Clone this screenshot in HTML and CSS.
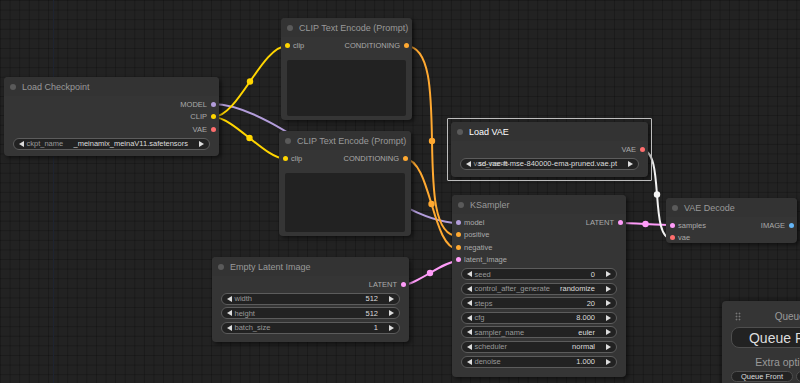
FILE: index.html
```html
<!DOCTYPE html>
<html>
<head>
  <title>ComfyUI</title>
  <link rel="stylesheet" href="styles.css">
</head>
<body>
<div class="canvas">

  <!-- links sit under the nodes -->
  <svg class="links" width="800" height="383" viewBox="0 0 800 383">
    <g fill="none" stroke-width="2">
      <path stroke="#b39ddb" d="M213 104 C281 104 390 223 458 223"/>
      <path stroke="#ffd500" d="M213 117 C238.6 117 261.4 46 287 46"/>
      <path stroke="#ffd500" d="M213 117 C234 117 265 159 286 159"/>
      <path stroke="#ffa931" d="M406 46 C455 46 409 236 458 236"/>
      <path stroke="#ffa931" d="M405 159 C431 159 432 249 458 249"/>
      <path stroke="#ff9cf9" d="M402 285 C417 285 443 261 458 261"/>
      <path stroke="#ff9cf9" d="M619 223 C632 223 659 225 672 225"/>
      <path stroke="#f4f4f4" d="M642 150 C665.5 150 648.5 239 672 239"/>
    </g>
    <g>
      <circle cx="250" cy="81.5" r="3.2" fill="#ffd500"/>
      <circle cx="249.5" cy="138" r="3.2" fill="#ffd500"/>
      <circle cx="432" cy="141" r="3.2" fill="#ffa931"/>
      <circle cx="431.5" cy="204" r="3.2" fill="#ffa931"/>
      <circle cx="430" cy="273" r="3.2" fill="#ff9cf9"/>
      <circle cx="645.5" cy="224" r="3.2" fill="#ff9cf9"/>
      <circle cx="657" cy="194.5" r="3.2" fill="#f4f4f4"/>
    </g>
  </svg>

  <!-- Load Checkpoint -->
  <div class="node ckpt">
    <div class="title"><span class="bullet"></span>Load Checkpoint</div>
    <div class="body">
      <div class="row"><span></span><span class="out">MODEL<i class="slot model"></i></span></div>
      <div class="row"><span></span><span class="out">CLIP<i class="slot clip"></i></span></div>
      <div class="row"><span></span><span class="out">VAE<i class="slot vae"></i></span></div>
      <div class="widgets">
        <div class="widget"><i class="arr-l"></i><span class="name">ckpt_name</span><span class="val">_meinamix_meinaV11.safetensors</span><i class="arr-r"></i></div>
      </div>
    </div>
  </div>

  <!-- CLIP Text Encode (positive) -->
  <div class="node clip1">
    <div class="title"><span class="bullet"></span>CLIP Text Encode (Prompt)</div>
    <div class="body">
      <div class="row"><span class="in"><i class="slot clip"></i>clip</span><span class="out">CONDITIONING<i class="slot cond"></i></span></div>
      <div class="prompt"></div>
    </div>
  </div>

  <!-- CLIP Text Encode (negative) -->
  <div class="node clip2">
    <div class="title"><span class="bullet"></span>CLIP Text Encode (Prompt)</div>
    <div class="body">
      <div class="row"><span class="in"><i class="slot clip"></i>clip</span><span class="out">CONDITIONING<i class="slot cond"></i></span></div>
      <div class="prompt"></div>
    </div>
  </div>

  <!-- Load VAE (selected) -->
  <div class="node vae-loader selected">
    <div class="title"><span class="bullet"></span>Load VAE</div>
    <div class="body">
      <div class="row"><span></span><span class="out">VAE<i class="slot vae"></i></span></div>
      <div class="widgets">
        <div class="widget overlap"><i class="arr-l"></i><span class="name">vae_name</span><span class="val">sd-vae-ft-mse-840000-ema-pruned.vae.pt</span><i class="arr-r"></i></div>
      </div>
    </div>
  </div>

  <!-- KSampler -->
  <div class="node ksampler">
    <div class="title"><span class="bullet"></span>KSampler</div>
    <div class="body">
      <div class="row"><span class="in"><i class="slot model"></i>model</span><span class="out">LATENT<i class="slot latent"></i></span></div>
      <div class="row"><span class="in"><i class="slot cond"></i>positive</span></div>
      <div class="row"><span class="in"><i class="slot cond"></i>negative</span></div>
      <div class="row"><span class="in"><i class="slot latent"></i>latent_image</span></div>
      <div class="widgets">
        <div class="widget"><i class="arr-l"></i><span class="name">seed</span><span class="val">0</span><i class="arr-r"></i></div>
        <div class="widget"><i class="arr-l"></i><span class="name">control_after_generate</span><span class="val">randomize</span><i class="arr-r"></i></div>
        <div class="widget"><i class="arr-l"></i><span class="name">steps</span><span class="val">20</span><i class="arr-r"></i></div>
        <div class="widget"><i class="arr-l"></i><span class="name">cfg</span><span class="val">8.000</span><i class="arr-r"></i></div>
        <div class="widget"><i class="arr-l"></i><span class="name">sampler_name</span><span class="val">euler</span><i class="arr-r"></i></div>
        <div class="widget"><i class="arr-l"></i><span class="name">scheduler</span><span class="val">normal</span><i class="arr-r"></i></div>
        <div class="widget"><i class="arr-l"></i><span class="name">denoise</span><span class="val">1.000</span><i class="arr-r"></i></div>
      </div>
    </div>
  </div>

  <!-- VAE Decode -->
  <div class="node vae-decode">
    <div class="title"><span class="bullet"></span>VAE Decode</div>
    <div class="body">
      <div class="row"><span class="in"><i class="slot latent"></i>samples</span><span class="out">IMAGE<i class="slot image"></i></span></div>
      <div class="row"><span class="in"><i class="slot vae"></i>vae</span></div>
    </div>
  </div>

  <!-- Empty Latent Image -->
  <div class="node latent-img">
    <div class="title"><span class="bullet"></span>Empty Latent Image</div>
    <div class="body">
      <div class="row"><span></span><span class="out">LATENT<i class="slot latent"></i></span></div>
      <div class="widgets">
        <div class="widget"><i class="arr-l"></i><span class="name">width</span><span class="val">512</span><i class="arr-r"></i></div>
        <div class="widget"><i class="arr-l"></i><span class="name">height</span><span class="val">512</span><i class="arr-r"></i></div>
        <div class="widget"><i class="arr-l"></i><span class="name">batch_size</span><span class="val">1</span><i class="arr-r"></i></div>
      </div>
    </div>
  </div>

  <!-- floating queue menu -->
  <div class="menu">
    <div class="menu-head"><span class="handle"></span><span class="qsize">Queue size: 0</span></div>
    <button class="queue-btn">Queue Prompt</button>
    <label class="extra">Extra options<input type="checkbox"></label>
    <div class="menu-btns"><button>Queue Front</button><button>View Queue</button></div>
  </div>

</div>
</body>
</html>
```

FILE: styles.css
```css
html, body { margin: 0; height: 100%; }
body { background: #222; overflow: hidden; font-family: "Liberation Sans", Arial, sans-serif; }

.canvas { position: relative; width: 800px; height: 383px; overflow: hidden; background-color: #222;
  background-image:
    linear-gradient(to right, transparent 53px, #1e2330 53px, #1e2330 54px, transparent 54px),
    linear-gradient(to right, rgba(0,0,0,0.22) 1px, transparent 1px),
    linear-gradient(to bottom, rgba(0,0,0,0.22) 1px, transparent 1px);
  background-size: 100% 100%, 9.6px 9.6px, 9.6px 9.6px; }

.links { position: absolute; left: 0; top: 0; }

/* nodes */
.node { position: absolute; box-sizing: border-box; display: flex; flex-direction: column; background: #353535; border-radius: 4px; box-shadow: 2px 2px 4px rgba(0,0,0,0.55); }
.node .title { height: 19px; flex: none; display: flex; align-items: center; gap: 6px; padding-left: 6px; background: #333; border-radius: 4px 4px 0 0; color: #999; font-size: 9px; white-space: nowrap; }
.bullet { width: 6px; height: 6px; border-radius: 50%; background: #5a5a5a; }
.node .body { flex: 1; display: flex; flex-direction: column; padding-top: 2px; }

.ckpt { left: 4px; top: 77px; width: 215px; height: 79px; }
.clip1 { left: 281px; top: 18px; width: 131px; height: 102px; }
.clip2 { left: 279px; top: 131px; width: 132px; height: 105px; }
.vae-loader { left: 451px; top: 122px; width: 197px; height: 55px; }
.ksampler { left: 452px; top: 195px; width: 174px; height: 182px; }
.vae-decode { left: 666px; top: 198px; width: 131px; height: 45px; }
.latent-img { left: 212px; top: 257px; width: 197px; height: 85px; }

.selected::before { content: ""; position: absolute; left: -4px; top: -4px; right: -4px; bottom: -4px; border: 1px solid #bdbdbd; border-radius: 1px; pointer-events: none; }
.selected .title { color: #fff; }

/* slots */
.row { height: 12.5px; display: flex; justify-content: space-between; align-items: center; padding: 0 3.5px; font-size: 7.5px; color: #aaa; }
.in, .out { display: flex; align-items: center; white-space: nowrap; }
.in .slot { margin-right: 3.5px; }
.out .slot { margin-left: 3.5px; }
.slot { width: 5px; height: 5px; border-radius: 50%; display: block; }
.slot.model { background: #b39ddb; }
.slot.clip { background: #ffd500; }
.slot.vae { background: #ff6e6e; }
.slot.cond { background: #ffa931; }
.slot.latent { background: #ff9cf9; }
.slot.image { background: #64b5f6; }

.prompt { flex: 1; margin: 8.5px 6px 4.5px; background: #222; border-radius: 2px; }

/* widgets */
.widgets { display: flex; flex-direction: column; gap: 2.6px; margin: 2px 9px 0; }
.widget { height: 12px; box-sizing: border-box; display: flex; align-items: center; padding: 0 5px 0 4.5px; background: #222; border: 1px solid #5c5c5c; border-radius: 6px; font-size: 7.5px; white-space: nowrap; }
.widget .name { color: #999; margin-left: 3px; }
.widget .val { flex: 1; text-align: right; color: #ddd; margin-right: 11px; }
.widget.overlap .name { width: 0; }
.arr-l, .arr-r { width: 0; height: 0; border-top: 3px solid transparent; border-bottom: 3px solid transparent; }
.arr-l { border-right: 5px solid #ddd; }
.arr-r { border-left: 5px solid #ddd; }

/* queue menu */
.menu { position: absolute; left: 722px; top: 301px; width: 127px; height: 100px; padding: 9px 9px 0; background: #353535; border-radius: 4px; box-shadow: 0 0 4px rgba(0,0,0,0.6); color: #999; }
.menu-head { display: flex; align-items: center; height: 12px; font-size: 10px; }
.handle { width: 6px; height: 9px; margin-left: 4px; background-image: radial-gradient(circle, #777 0.8px, transparent 1.1px); background-size: 3px 3px; }
.qsize { flex: 1; text-align: center; padding-left: 12px; }
.queue-btn { display: block; width: 100%; height: 21px; margin-top: 5px; padding: 0; background: #222; border: 1px solid #4e4e4e; border-radius: 8px; color: #ddd; font-family: inherit; font-size: 14px; }
.extra { display: flex; justify-content: center; align-items: center; height: 12px; margin-top: 8px; font-size: 10.5px; }
.extra input { width: 13px; height: 13px; margin: 0 0 0 4px; }
.menu-btns { display: flex; gap: 3px; margin-top: 3px; }
.menu-btns button { flex: none; width: 62px; height: 11px; padding: 0; background: #222; border: 1px solid #4e4e4e; border-radius: 6px; color: #ddd; font-family: inherit; font-size: 7.5px; line-height: 9px; }
```
